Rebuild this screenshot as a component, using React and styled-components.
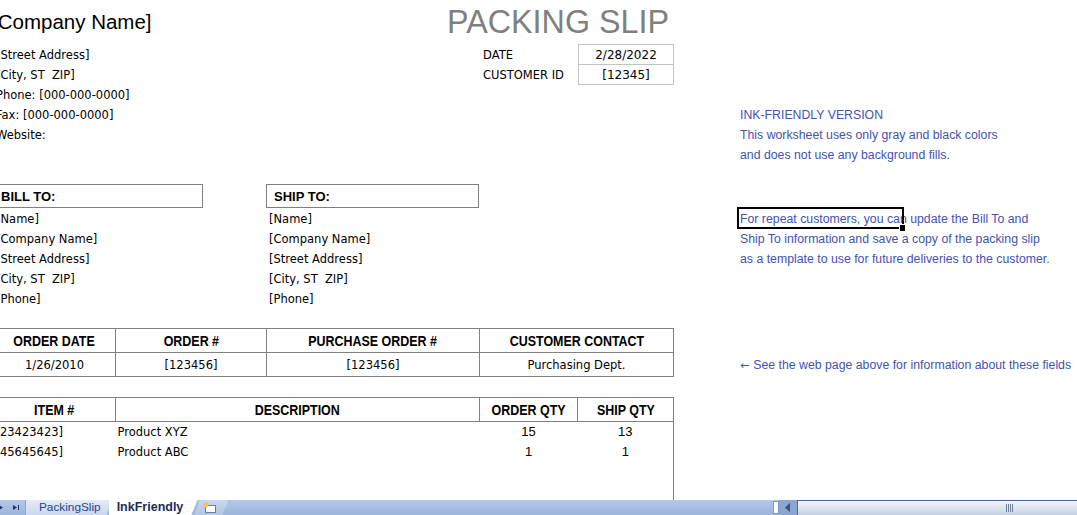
import React from "react";
import styled, { createGlobalStyle } from "styled-components";

const GlobalStyle = createGlobalStyle`
  html, body {
    margin: 0;
    padding: 0;
    background: #fff;
    overflow: hidden;
  }
  body {
    font-family: "DejaVu Sans", Verdana, sans-serif;
  }
`;

const Window = styled.div`
  width: 1077px;
  height: 515px;
  display: flex;
  flex-direction: column;
  overflow: hidden;
`;

const Sheet = styled.div`
  flex: 1;
  min-height: 0;
  display: flex;
  overflow: hidden;
`;

const Form = styled.div`
  flex: 0 0 680px;
  margin-left: -7px;
  font-size: 11.5px;
  color: #000;
`;

const TitleRow = styled.div`
  height: 44px;
  display: flex;
  justify-content: space-between;
  align-items: center;
  padding: 0 5px 0 0;
  font-family: "Liberation Sans", Arial, sans-serif;
`;

const CompanyName = styled.div`
  font-size: 20.5px;
  margin: 0 0 0 -1px;
`;

const Title = styled.div`
  font-size: 32.3px;
  color: #808080;
`;

const InfoRow = styled.div`
  display: flex;
  justify-content: space-between;
  align-items: flex-start;
`;

const Lines = styled.div`
  display: flex;
  flex-direction: column;
`;

const Line = styled.div`
  height: 20px;
  box-sizing: border-box;
  padding: 1px 0 0 3px;
  line-height: 20px;
  white-space: pre;
`;

const DateGrid = styled.div`
  display: flex;
`;

const DateLabels = styled.div`
  width: 98px;
  display: flex;
  flex-direction: column;
`;

const DateValues = styled.div`
  width: 96px;
  box-sizing: border-box;
  border: 1px solid #c3c3c3;
  display: flex;
  flex-direction: column;
`;

const DateValue = styled.div`
  height: 19px;
  line-height: 20px;
  text-align: center;
  font-size: 12px;
  border-top: ${(p) => (p.$divider ? "1px solid #c3c3c3" : "none")};
`;

const PartyRow = styled.div`
  display: flex;
  gap: 63px;
  margin-top: 40px;
`;

const Party = styled.div`
  width: ${(p) => p.$width}px;
  display: flex;
  flex-direction: column;
`;

const PartyHead = styled.div`
  height: 24px;
  box-sizing: border-box;
  border: 1px solid #808080;
  padding: 1px 0 0 7px;
  line-height: 22px;
  font-family: "Liberation Sans", Arial, sans-serif;
  font-weight: bold;
  font-size: 13px;
`;

const Table = styled.table`
  width: 680px;
  table-layout: fixed;
  border-collapse: collapse;
  margin-top: 20px;
`;

const Th = styled.th`
  height: 24px;
  box-sizing: border-box;
  padding: 1px 0 0;
  border: 1px solid #808080;
  font-family: "Liberation Sans", Arial, sans-serif;
  font-weight: bold;
  font-size: 15px;
  line-height: 20px;
  text-align: center;
  white-space: nowrap;
  overflow: hidden;
`;

const Narrow = styled.span`
  display: inline-block;
  transform: scaleX(0.83);
`;

const Td = styled.td`
  height: 24px;
  box-sizing: border-box;
  padding: 1px 0 0;
  border: 1px solid #808080;
  text-align: center;
  font-size: 11.5px;
  line-height: 20px;
  white-space: nowrap;
`;

const ItemTd = styled.td`
  height: 20px;
  padding: 0 2px;
  border: none;
  border-right: ${(p) => (p.$edge ? "1px solid #808080" : "none")};
  text-align: ${(p) => (p.$num ? "center" : "left")};
  font-family: ${(p) =>
    p.$num ? '"Liberation Sans", Arial, sans-serif' : '"DejaVu Sans", sans-serif'};
  font-size: ${(p) => (p.$num ? "13px" : "11.5px")};
  line-height: 20px;
  white-space: nowrap;
  vertical-align: middle;
`;

const Notes = styled.div`
  flex: 1;
  padding-left: 66px;
  padding-top: 105px;
  display: flex;
  flex-direction: column;
  font-family: "Liberation Sans", Arial, sans-serif;
  font-size: 12.3px;
  color: #4353b1;
`;

const NoteBlock = styled.div`
  display: flex;
  flex-direction: column;
  margin-top: ${(p) => p.$gap || 0}px;
`;

const NoteLine = styled.div`
  position: relative;
  height: 20px;
  line-height: 20px;
  white-space: nowrap;
`;

const Arrow = styled.span`
  font-family: "DejaVu Sans", sans-serif;
  font-size: 11px;
  margin-right: 4px;
`;

const Selection = styled.div`
  position: absolute;
  left: -3px;
  top: -2px;
  width: 167px;
  height: 22px;
  box-sizing: border-box;
  border: 2px solid #000;
  pointer-events: none;
`;

const FillHandle = styled.div`
  position: absolute;
  right: -4px;
  bottom: -5px;
  width: 5px;
  height: 6px;
  background: #000;
  border: 1px solid #fff;
`;

const TabBar = styled.div`
  flex: 0 0 15px;
  height: 15px;
  display: flex;
  align-items: stretch;
  background: linear-gradient(#b4c8e8, #9db5dc);
  font-family: "Liberation Sans", Arial, sans-serif;
`;

const Nav = styled.div`
  width: 25px;
  display: flex;
  align-items: center;
`;

const Tab = styled.div`
  display: flex;
  align-items: center;
  padding: ${(p) => (p.$active ? "0 14px 0 8px" : "0 12px 0 13px")};
  margin-left: ${(p) => (p.$active ? "-4px" : "0")};
  background: ${(p) =>
    p.$active ? "#fff" : "linear-gradient(#e4ecf7, #c9d7ee)"};
  border-left: ${(p) => (p.$active ? "none" : "1px solid #8ea6cf")};
  clip-path: polygon(0 0, 100% 0, calc(100% - 6px) 100%, 0 100%);
  font-size: ${(p) => (p.$active ? "12.5px" : "11.8px")};
  font-weight: ${(p) => (p.$active ? "bold" : "normal")};
  color: ${(p) => (p.$active ? "#1b2d55" : "#22478f")};
  line-height: 15px;
`;

const NewTab = styled.div`
  width: 34px;
  margin-left: -3px;
  display: flex;
  align-items: center;
  padding-left: 8px;
  box-sizing: border-box;
  background: linear-gradient(#c9d8ef, #b2c6e6);
  clip-path: polygon(6px 0, 100% 0, calc(100% - 6px) 100%, 0 100%);
`;

const Scroll = styled.div`
  margin-left: auto;
  width: 304px;
  display: flex;
  align-items: stretch;
`;

const SplitBox = styled.div`
  width: 6px;
  margin: 1px 0;
  box-sizing: border-box;
  background: #fff;
  border: 1px solid #7f98c4;
`;

const ArrowButton = styled.div`
  width: 18px;
  display: flex;
  align-items: center;
  justify-content: center;
  background: #8ca6d2;
  border-right: 1px solid #4a6aa3;
`;

const Track = styled.div`
  flex: 1;
  display: flex;
  align-items: center;
  border-top: 1px solid #4a6aa3;
  background: linear-gradient(#f3f6fa, #d9e1ec 60%, #c3cfe1);
`;

const Grip = styled.div`
  margin-left: 208px;
  width: 8px;
  height: 8px;
  background: repeating-linear-gradient(90deg, #6f7f99 0 1px, transparent 1px 2px);
`;

const billLines = ["[Name]", "[Company Name]", "[Street Address]", "[City, ST  ZIP]", "[Phone]"];

const items = [
  { no: "[23423423]", desc: "Product XYZ", ordered: 15, shipped: 13 },
  { no: "[45645645]", desc: "Product ABC", ordered: 1, shipped: 1 },
];

const App = () => {
  return (
    <Window>
      <GlobalStyle />
      <Sheet>
        <Form>
          <TitleRow>
            <CompanyName>[Company Name]</CompanyName>
            <Title>PACKING SLIP</Title>
          </TitleRow>
          <InfoRow>
            <Lines>
              <Line>[Street Address]</Line>
              <Line>[City, ST  ZIP]</Line>
              <Line>Phone: [000-000-0000]</Line>
              <Line>Fax: [000-000-0000]</Line>
              <Line>Website:</Line>
            </Lines>
            <DateGrid>
              <DateLabels>
                <Line>DATE</Line>
                <Line>CUSTOMER ID</Line>
              </DateLabels>
              <DateValues>
                <DateValue>2/28/2022</DateValue>
                <DateValue $divider>[12345]</DateValue>
              </DateValues>
            </DateGrid>
          </InfoRow>
          <PartyRow>
            <Party $width={210}>
              <PartyHead>BILL TO:</PartyHead>
              {billLines.map((l) => (
                <Line key={l}>{l}</Line>
              ))}
            </Party>
            <Party $width={213}>
              <PartyHead>SHIP TO:</PartyHead>
              {billLines.map((l) => (
                <Line key={l}>{l}</Line>
              ))}
            </Party>
          </PartyRow>
          <Table>
            <colgroup>
              <col style={{ width: 122 }} />
              <col style={{ width: 151 }} />
              <col style={{ width: 213 }} />
              <col style={{ width: 194 }} />
            </colgroup>
            <thead>
              <tr>
                <Th><Narrow>ORDER DATE</Narrow></Th>
                <Th><Narrow>ORDER #</Narrow></Th>
                <Th><Narrow>PURCHASE ORDER #</Narrow></Th>
                <Th><Narrow>CUSTOMER CONTACT</Narrow></Th>
              </tr>
            </thead>
            <tbody>
              <tr>
                <Td>1/26/2010</Td>
                <Td>[123456]</Td>
                <Td>[123456]</Td>
                <Td>Purchasing Dept.</Td>
              </tr>
            </tbody>
          </Table>
          <Table>
            <colgroup>
              <col style={{ width: 122 }} />
              <col style={{ width: 364 }} />
              <col style={{ width: 98 }} />
              <col style={{ width: 96 }} />
            </colgroup>
            <thead>
              <tr>
                <Th><Narrow>ITEM #</Narrow></Th>
                <Th><Narrow>DESCRIPTION</Narrow></Th>
                <Th><Narrow>ORDER QTY</Narrow></Th>
                <Th><Narrow>SHIP QTY</Narrow></Th>
              </tr>
            </thead>
            <tbody>
              {items.map((it) => (
                <tr key={it.no}>
                  <ItemTd>{it.no}</ItemTd>
                  <ItemTd>{it.desc}</ItemTd>
                  <ItemTd $num>{it.ordered}</ItemTd>
                  <ItemTd $num $edge>{it.shipped}</ItemTd>
                </tr>
              ))}
              <tr>
                <ItemTd style={{ height: 40 }} />
                <ItemTd />
                <ItemTd />
                <ItemTd $edge />
              </tr>
            </tbody>
          </Table>
        </Form>
        <Notes>
          <NoteBlock>
            <NoteLine>INK-FRIENDLY VERSION</NoteLine>
            <NoteLine>This worksheet uses only gray and black colors</NoteLine>
            <NoteLine>and does not use any background fills.</NoteLine>
          </NoteBlock>
          <NoteBlock $gap={44}>
            <NoteLine>
              For repeat customers, you can update the Bill To and
              <Selection>
                <FillHandle />
              </Selection>
            </NoteLine>
            <NoteLine>Ship To information and save a copy of the packing slip</NoteLine>
            <NoteLine>as a template to use for future deliveries to the customer.</NoteLine>
          </NoteBlock>
          <NoteBlock $gap={86}>
            <NoteLine>
              <Arrow>←</Arrow>See the web page above for information about these fields
            </NoteLine>
          </NoteBlock>
        </Notes>
      </Sheet>
      <TabBar>
        <Nav>
          <svg width="25" height="15" viewBox="0 0 25 15">
            <path d="M-1 5 L3 7.5 L-1 10 Z" fill="#1d3567" />
            <path d="M13 5 L17 7.5 L13 10 Z" fill="#1d3567" />
            <rect x="18" y="5" width="1" height="5" fill="#1d3567" />
          </svg>
        </Nav>
        <Tab>PackingSlip</Tab>
        <Tab $active>InkFriendly</Tab>
        <NewTab>
          <svg width="16" height="12" viewBox="0 0 16 12">
            <rect x="3.5" y="3.5" width="10" height="7" fill="#fff" stroke="#6c7f9f" />
            <circle cx="4" cy="3" r="2.4" fill="#f3c34a" />
          </svg>
        </NewTab>
        <Scroll>
          <SplitBox />
          <ArrowButton>
            <svg width="6" height="9" viewBox="0 0 6 9">
              <path d="M5 0 L0 4.5 L5 9 Z" fill="#3d4f73" />
            </svg>
          </ArrowButton>
          <Track>
            <Grip />
          </Track>
        </Scroll>
      </TabBar>
    </Window>
  );
};

export default App;
